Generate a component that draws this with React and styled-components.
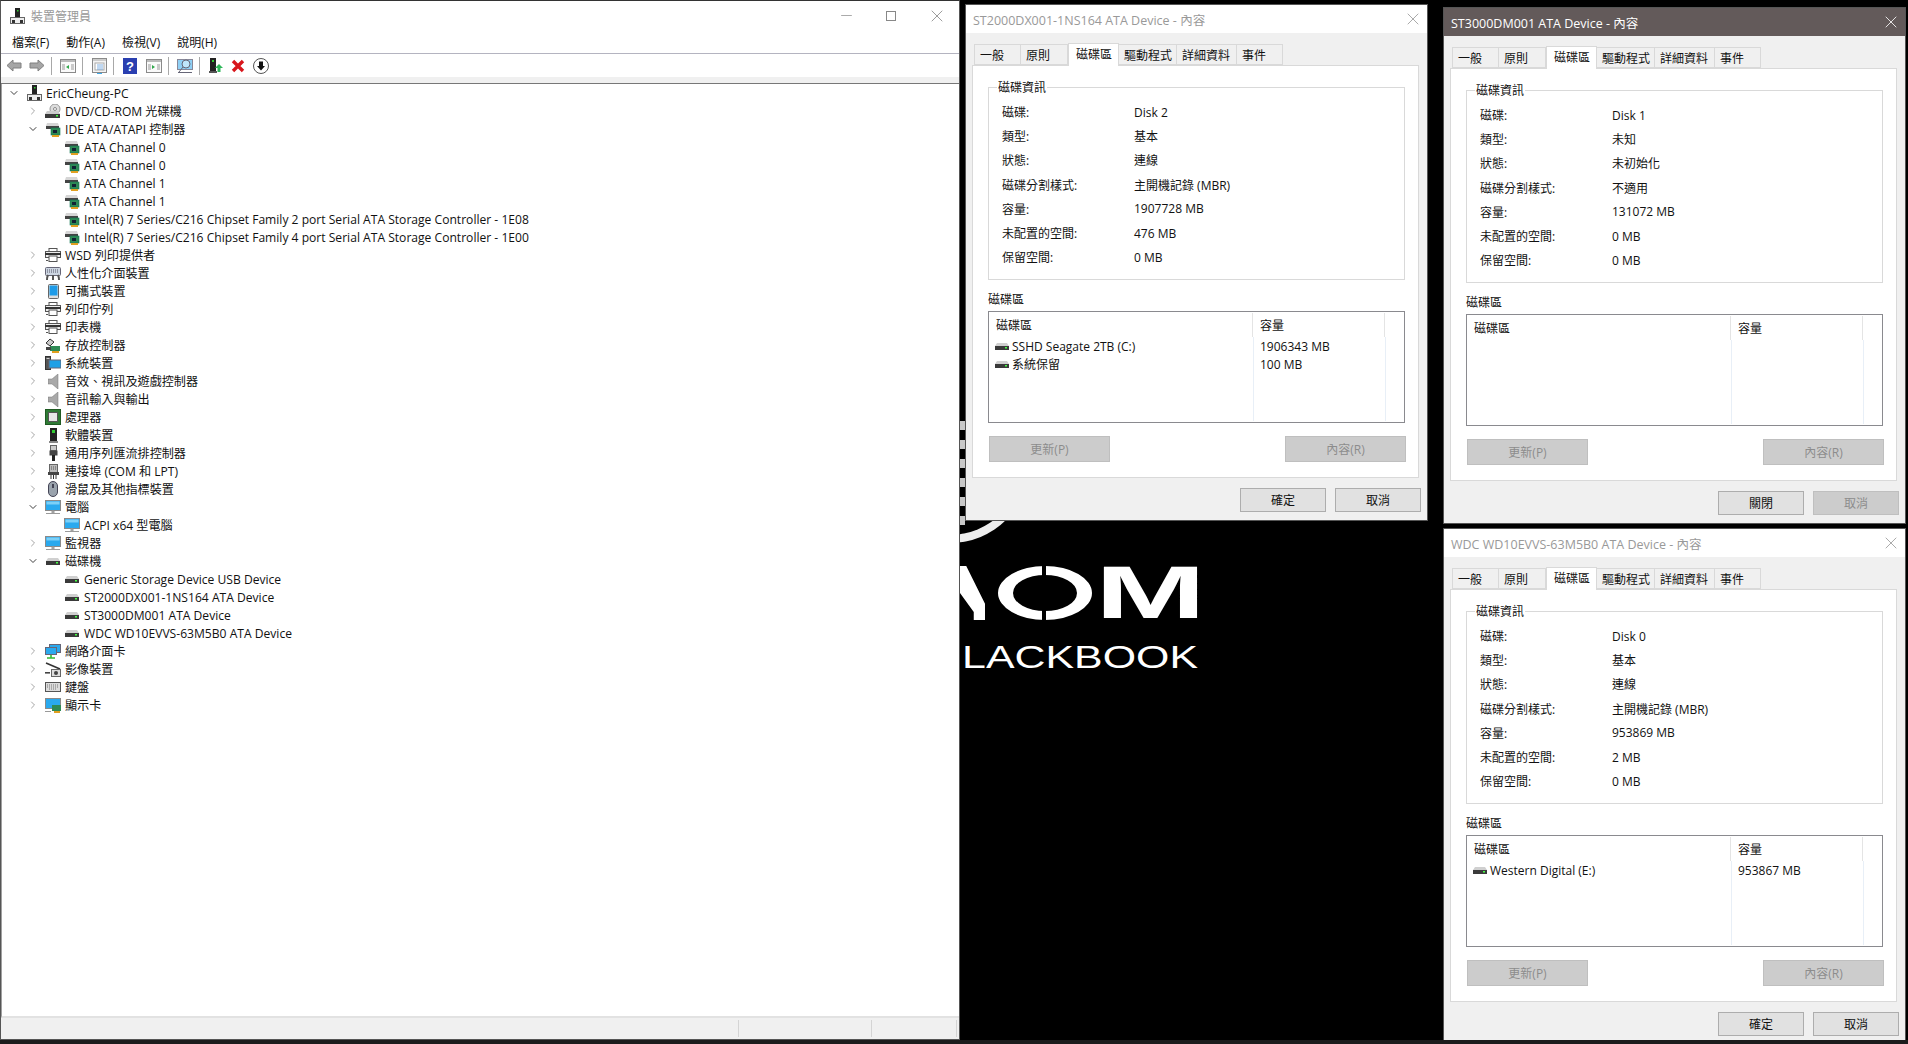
import React from "react"
import styled, { createGlobalStyle } from "styled-components"
import { ChevronRight, ChevronDown, X, Minus } from "lucide-react"

const GlobalStyle = createGlobalStyle`
  html, body { margin: 0; padding: 0; background: #000; overflow: hidden; }
  body {
    font-family: "Open Sans", "Noto Sans CJK TC", sans-serif;
    font-size: 12px;
    color: #111;
  }
`

const Page = styled.div`
  width: 1908px;
  height: 1044px;
  display: flex;
  flex-direction: column;
  background: #000;
  overflow: hidden;
`
const Desktop = styled.div`
  height: 1040px;
  display: flex;
  overflow: hidden;
`
const Taskbar = styled.div`
  height: 4px;
  background: #1c1c1c;
`

/* ---- device manager ---- */
const MainWindow = styled.div`
  width: 960px;
  height: 1040px;
  flex: none;
  box-sizing: border-box;
  background: #fff;
  border-top: 1px solid #333;
  border-left: 1px solid #555;
  border-right: 1px solid #555;
  display: flex;
  flex-direction: column;
`
const MainTitle = styled.div`
  height: 29px;
  display: flex;
  align-items: center;
  padding: 0 0 0 9px;
  color: #999;
  font-size: 12px;
  gap: 6px;
`
const WinControls = styled.div`
  margin-left: auto;
  display: flex;
  align-items: center;
  gap: 31px;
  padding-right: 12px;
  color: #888;
`
const MaxBox = styled.span`
  width: 10px;
  height: 10px;
  box-sizing: border-box;
  border: 1px solid #888;
`
const MenuBar = styled.div`
  height: 23px;
  display: flex;
  align-items: center;
  padding-left: 11px;
  gap: 17px;
  border-bottom: 1px solid #b4b4c0;
  font-size: 12px;
`
const Toolbar = styled.div`
  height: 23px;
  display: flex;
  align-items: center;
  padding-left: 5px;
  background: #fff;
`
const ToolIcon = styled.span`
  width: 16px;
  height: 18px;
  margin-right: ${(p) => p.$gap || 0}px;
  display: flex;
  align-items: center;
  justify-content: center;
`
const ToolSep = styled.span`
  width: 1px;
  height: 18px;
  background: #a8a8a8;
  margin-left: 6px;
  margin-right: 8px;
`
const ToolStrip = styled.div`
  height: 6px;
  background: #f0f0f0;
  border-bottom: 1px solid #777;
`
const TreePane = styled.div`
  flex: 1;
  border-left: 1px solid #a0a0a0;
  border-bottom: 2px solid #e2e2e2;
  background: #fff;
`
const TreeRow = styled.div`
  height: 18px;
  display: flex;
  align-items: center;
  padding-left: ${(p) => p.$level * 19 + 6}px;
  white-space: nowrap;
  font-size: 12.1px;
`
const Twisty = styled.span`
  width: 12px;
  height: 12px;
  flex: none;
  display: flex;
  align-items: center;
  justify-content: center;
  color: ${(p) => (p.$open ? "#404040" : "#a6a6a6")};
  margin-right: 6px;
`
const TwistySpace = styled.span`
  width: 18px;
  flex: none;
`
const TreeIcon = styled.span`
  width: 16px;
  height: 16px;
  flex: none;
  display: flex;
  align-items: center;
  justify-content: center;
  margin-right: 4px;
`
const StatusBar = styled.div`
  height: 21px;
  flex: none;
  display: flex;
  justify-content: flex-end;
  background: #f0f0f0;
  border-bottom: 1px solid #555;
`
const StatusCell = styled.div`
  width: ${(p) => p.$w}px;
  box-sizing: border-box;
  border-left: 1px solid #d4d4d4;
  margin: 2px 0;
`

/* ---- properties dialogs ---- */
const MiddleColumn = styled.div`
  width: 477px;
  flex: none;
  position: relative;
  padding: 4px 0 0 5px;
  box-sizing: border-box;
`
const RightColumn = styled.div`
  flex: 1;
  display: flex;
  flex-direction: column;
  padding: 7px 0 0 6px;
  gap: 4px;
  background: #000;
`
const Dialog = styled.div`
  width: 463px;
  height: 517px;
  flex: none;
  box-sizing: border-box;
  border: 1px solid #555;
  background: #f0f0f0;
  position: relative;
  z-index: 1;
`
const DialogTitle = styled.div`
  height: 28px;
  display: flex;
  align-items: center;
  justify-content: space-between;
  padding: 0 4px 0 7px;
  font-size: 12.5px;
  background: ${(p) => (p.$active ? "#635a5a" : "#fff")};
  color: ${(p) => (p.$active ? "#fff" : "#999")};
`
const TabRow = styled.div`
  display: flex;
  align-items: flex-end;
  height: 23px;
  margin: 9px 0 0 8px;
  position: relative;
  z-index: 1;
`
const Tab = styled.div`
  width: ${(p) => p.$w}px;
  box-sizing: border-box;
  height: ${(p) => (p.$on ? 23 : 21)}px;
  margin-bottom: ${(p) => (p.$on ? -1 : 0)}px;
  background: ${(p) => (p.$on ? "#fff" : "#f0f0f0")};
  border: 1px solid #d9d9d9;
  border-bottom: ${(p) => (p.$on ? "none" : "1px solid #d9d9d9")};
  border-left: ${(p) => (p.$first || p.$on ? "1px solid #d9d9d9" : "none")};
  display: flex;
  align-items: center;
  padding-left: ${(p) => (p.$on ? 7 : 5)}px;
  padding-bottom: ${(p) => (p.$on ? 3 : 0)}px;
  font-size: 12px;
`
const TabPanel = styled.div`
  height: 413px;
  box-sizing: border-box;
  margin: 0 8px 0 6px;
  background: #fff;
  border: 1px solid #d9d9d9;
  padding: 21px 13px 0 15px;
`
const GroupBox = styled.div`
  height: 193px;
  box-sizing: border-box;
  border: 1px solid #d9d9d9;
  padding: 0 0 0 13px;
  position: relative;
`
const GroupTitle = styled.span`
  position: absolute;
  top: -8px;
  left: 8px;
  background: #fff;
  padding: 0 1px;
  font-size: 12px;
  line-height: 16px;
`
const InfoGrid = styled.div`
  display: grid;
  grid-template-columns: 132px 1fr;
  grid-auto-rows: 24.2px;
  align-items: center;
  padding-top: 12px;
  font-size: 12px;
`
const ListCaption = styled.div`
  margin-top: 6px;
  height: 25px;
  display: flex;
  align-items: center;
  font-size: 12px;
`
const ListBox = styled.div`
  height: 112px;
  box-sizing: border-box;
  border: 1px solid #8a8a8f;
  display: grid;
  grid-template-columns: 264px 132px 1fr;
  grid-auto-rows: min-content;
  position: relative;
  font-size: 12px;
`
const ListHead = styled.div`
  height: 24px;
  display: flex;
  align-items: center;
  padding-left: 7px;
  border-right: 1px solid #e4e4e4;
  margin-top: 1px;
`
const ListCell = styled.div`
  height: 18px;
  display: flex;
  align-items: center;
  padding-left: ${(p) => p.$pad || 6}px;
  gap: 3px;
  white-space: nowrap;
`
const ColLine = styled.div`
  position: absolute;
  top: 25px;
  bottom: 1px;
  left: ${(p) => p.$x}px;
  width: 1px;
  background: #e8eff7;
`
const PanelButtons = styled.div`
  display: flex;
  justify-content: space-between;
  margin: 13px -1px 0 1px;
`
const GrayButton = styled.div`
  width: 121px;
  height: 26px;
  box-sizing: border-box;
  background: #ccc;
  border: 1px solid #bfbfbf;
  color: #8c8c8c;
  display: flex;
  align-items: center;
  justify-content: center;
  font-size: 12px;
`
const DialogFooter = styled.div`
  display: flex;
  justify-content: flex-end;
  gap: 9px;
  padding: 10px 6px 0 0;
`
const FootButton = styled.div`
  width: 86px;
  height: 24px;
  box-sizing: border-box;
  background: ${(p) => (p.$off ? "#ccc" : "#e1e1e1")};
  border: 1px solid ${(p) => (p.$off ? "#bfbfbf" : "#adadad")};
  color: ${(p) => (p.$off ? "#8c8c8c" : "#111")};
  display: flex;
  align-items: center;
  justify-content: center;
  font-size: 12px;
`

/* ---- wallpaper logo ---- */
const Logo = styled.div`
  position: absolute;
  left: 0;
  top: 0;
  width: 100%;
  height: 100%;
  overflow: hidden;
  color: #fff;
  font-family: "Liberation Sans", sans-serif;
  font-weight: 700;
`
const LogoBig = styled.div`
  position: absolute;
  left: 0;
  top: 566px;
  display: flex;
  gap: 13px;
  align-items: center;
`
const LogoBar = styled.span`
  width: 25px;
  height: 54px;
  background: #fff;
  clip-path: polygon(0 0, 25% 0, 100% 70%, 100% 100%, 55% 100%, 55% 85%, 0 50%);
`
const LogoO = styled.span`
  width: 94px;
  height: 54px;
  box-sizing: border-box;
  border: 15px solid #fff;
  border-top-width: 9px;
  border-bottom-width: 9px;
  border-radius: 50%;
  position: relative;
  &::before {
    content: "";
    position: absolute;
    left: 29px;
    top: -10px;
    bottom: -10px;
    width: 4px;
    background: #000;
  }
`
const LogoM = styled.span`
  width: 93px;
  margin-left: -10px;
  font-size: 74px;
  line-height: 54px;
  transform-origin: left center;
  transform: scaleX(1.8);
`
const LogoSmall = styled.div`
  position: absolute;
  left: 61px;
  top: 645px;
  width: 177px;
  text-align: right;
  white-space: nowrap;
  font-size: 32px;
  font-weight: 400;
  line-height: 24px;
  transform-origin: right center;
  transform: scaleX(1.34);
`
const LogoRing = styled.div`
  position: absolute;
  left: -90px;
  top: 383px;
  width: 144px;
  height: 144px;
  border: 8px solid transparent;
  border-bottom-color: #eee;
  border-radius: 50%;
`
const LogoStripes = styled.div`
  position: absolute;
  left: 0;
  top: 421px;
  width: 5px;
  height: 104px;
  background: repeating-linear-gradient(#c8c8c8 0 9px, #000 9px 19px);
`

/* ---- icons ---- */
const ComputerIcon = () => (
  <svg width="15" height="16" viewBox="0 0 15 16">
    <rect x="5" y="0" width="5" height="9" fill="#222" />
    <rect x="7" y="2" width="1.5" height="1.5" fill="#3c3" />
    <rect x="0.5" y="9.5" width="14" height="6" fill="#eee" stroke="#666" />
    <rect x="2" y="12" width="3" height="3" fill="#333" />
    <rect x="10" y="12" width="3" height="3" fill="#333" />
  </svg>
)
const DriveIcon = () => (
  <svg width="14" height="9" viewBox="0 0 14 9">
    <path d="M2 1h10l2 3H0z" fill="#d0d0d0" />
    <rect x="0" y="4" width="14" height="4" fill="#3a3a3a" />
    <rect x="10" y="5" width="2" height="1.5" fill="#4f4" />
  </svg>
)
const ControllerIcon = () => (
  <svg width="16" height="15" viewBox="0 0 16 15">
    <path d="M2 1h11l1 3H1z" fill="#d6d6d6" />
    <rect x="1" y="4" width="13" height="3" fill="#444" />
    <rect x="6" y="6" width="9" height="7" fill="#2e8a55" stroke="#175" strokeWidth="0.6" />
    <rect x="8" y="8" width="4" height="3" fill="#123" />
    <rect x="7" y="13" width="7" height="2" fill="#e0a020" />
  </svg>
)
const DvdIcon = () => (
  <svg width="16" height="15" viewBox="0 0 16 15">
    <circle cx="10" cy="5" r="5" fill="#ddd" stroke="#999" />
    <circle cx="10" cy="5" r="1.5" fill="#fff" stroke="#888" />
    <path d="M2 7h11l2 3H0z" fill="#ccc" />
    <rect x="0" y="10" width="15" height="4" fill="#3a3a3a" />
    <rect x="11" y="11" width="2" height="1.5" fill="#4f4" />
  </svg>
)
const PrinterIcon = () => (
  <svg width="16" height="14" viewBox="0 0 16 14">
    <rect x="4" y="0.5" width="8" height="3" fill="#fff" stroke="#555" />
    <rect x="0.5" y="3.5" width="15" height="6" fill="#ececec" stroke="#555" />
    <rect x="0" y="5" width="16" height="2" fill="#333" />
    <rect x="4" y="8" width="8" height="5.5" fill="#fff" stroke="#555" />
    <rect x="1" y="12" width="2" height="1" fill="#555" />
  </svg>
)
const HidIcon = () => (
  <svg width="16" height="15" viewBox="0 0 16 15">
    <rect x="0.5" y="1.5" width="15" height="8" rx="1" fill="#cdd6e2" stroke="#667" />
    <path d="M2 4h12M2 6h12" stroke="#556" strokeDasharray="1 1" />
    <path d="M3 9c-1 2-1 4-1 5M8 9v5M13 9c1 2 1 4 1 5" stroke="#555" strokeWidth="2" fill="none" />
  </svg>
)
const PhoneIcon = () => (
  <svg width="11" height="15" viewBox="0 0 11 15">
    <rect x="0.5" y="0.5" width="10" height="14" rx="1" fill="#ddd" stroke="#666" />
    <rect x="1.5" y="1.5" width="8" height="10" fill="#1e9be8" />
  </svg>
)
const StorageIcon = () => (
  <svg width="16" height="15" viewBox="0 0 16 15">
    <path d="M1 5l4-4 4 3-4 4z" fill="#ccc" stroke="#333" />
    <rect x="5" y="8" width="10" height="5" fill="#2e8a55" />
    <rect x="7" y="13" width="7" height="2" fill="#e0a020" />
    <rect x="1" y="9" width="5" height="3" fill="#444" />
  </svg>
)
const SystemIcon = () => (
  <svg width="16" height="14" viewBox="0 0 16 14">
    <rect x="0.5" y="0.5" width="5" height="13" fill="#555" stroke="#333" />
    <rect x="4" y="4" width="12" height="8" fill="#1ea0e6" stroke="#667" />
    <rect x="1.5" y="2" width="3" height="1" fill="#ccc" />
  </svg>
)
const SpeakerIcon = () => (
  <svg width="11" height="15" viewBox="0 0 11 15">
    <path d="M0 5h4l6-5v15l-6-5H0z" fill="#a9a9a9" stroke="#777" strokeWidth="0.5" />
  </svg>
)
const CpuIcon = () => (
  <svg width="16" height="16" viewBox="0 0 16 16">
    <rect x="0.5" y="0.5" width="15" height="15" fill="#2f7a35" stroke="#1e5a22" />
    <rect x="3.5" y="3.5" width="9" height="9" fill="#e8e8e8" stroke="#555" />
  </svg>
)
const SoftwareIcon = () => (
  <svg width="9" height="15" viewBox="0 0 9 15">
    <rect x="1" y="0" width="7" height="13" fill="#222" />
    <rect x="3" y="2" width="3" height="3" fill="#3c3" />
    <rect x="0" y="13" width="9" height="2" fill="#888" />
  </svg>
)
const UsbIcon = () => (
  <svg width="9" height="16" viewBox="0 0 9 16">
    <rect x="1.5" y="0.5" width="6" height="5" fill="#ccc" stroke="#666" />
    <rect x="0.5" y="5.5" width="8" height="5" fill="#444" />
    <rect x="3" y="10" width="3" height="6" fill="#222" />
  </svg>
)
const PortIcon = () => (
  <svg width="11" height="15" viewBox="0 0 11 15">
    <rect x="1.5" y="0.5" width="8" height="8" fill="#bbb" stroke="#666" />
    <path d="M3 3h5M3 5h5" stroke="#555" strokeDasharray="1 1" />
    <rect x="0" y="8" width="11" height="3" fill="#444" />
    <path d="M3 11v4M5.5 11v4M8 11v4" stroke="#333" />
  </svg>
)
const MouseIcon = () => (
  <svg width="10" height="16" viewBox="0 0 10 16">
    <rect x="0.5" y="0.5" width="9" height="15" rx="4.5" fill="#9aa3ad" stroke="#445" />
    <rect x="4" y="3" width="2" height="4" fill="#445" />
  </svg>
)
const MonitorIcon = () => (
  <svg width="16" height="15" viewBox="0 0 16 15">
    <rect x="0.5" y="0.5" width="15" height="10" fill="#2aa9ee" stroke="#8a8a8a" />
    <rect x="1.5" y="1.5" width="13" height="3" fill="#7cd0f7" />
    <path d="M7 11h2v2H7zM1 13.5h14" stroke="#9a9a9a" fill="#bbb" />
  </svg>
)
const NetworkIcon = () => (
  <svg width="16" height="15" viewBox="0 0 16 15">
    <rect x="4.5" y="0.5" width="11" height="8" fill="#2aa9ee" stroke="#667" />
    <rect x="0.5" y="3.5" width="11" height="7" fill="#2aa9ee" stroke="#667" />
    <path d="M6 11v3M2 14h8" stroke="#3b3" strokeWidth="1.6" />
  </svg>
)
const CameraIcon = () => (
  <svg width="16" height="15" viewBox="0 0 16 15">
    <path d="M1 1l14 6" stroke="#333" strokeWidth="1.6" />
    <rect x="6.5" y="7.5" width="9" height="7" fill="#ddd" stroke="#666" />
    <circle cx="11" cy="11" r="2" fill="#444" />
    <rect x="0" y="10" width="5" height="1.6" fill="#444" />
  </svg>
)
const KeyboardIcon = () => (
  <svg width="16" height="10" viewBox="0 0 16 10">
    <rect x="0.5" y="0.5" width="15" height="9" fill="#dcdcdc" stroke="#555" />
    <path d="M2 3h12M2 5h12M4 7h8" stroke="#777" strokeDasharray="1 1" />
  </svg>
)
const DisplayCardIcon = () => (
  <svg width="16" height="15" viewBox="0 0 16 15">
    <rect x="0.5" y="0.5" width="15" height="10" fill="#2aa9ee" stroke="#8a8a8a" />
    <rect x="7" y="7" width="9" height="6" fill="#2e8a55" />
    <rect x="9" y="13" width="6" height="2" fill="#e0a020" />
    <path d="M0 13.5h6" stroke="#999" />
  </svg>
)
const WindowIcon = ({ arrow }) => (
  <svg width="16" height="14" viewBox="0 0 16 14">
    <rect x="0.5" y="0.5" width="15" height="13" fill="#fafafa" stroke="#8a8a8a" />
    <rect x="1" y="1" width="14" height="2" fill="#bbb" />
    <path d={arrow} fill="#2fa84a" />
    <path d="M11 6h3M11 8h3M11 10h3M2 6h3M2 8h3M2 10h3" stroke="#999" />
  </svg>
)
const SheetIcon = () => (
  <svg width="15" height="16" viewBox="0 0 15 16">
    <rect x="0.5" y="0.5" width="14" height="14" fill="#f4f4f4" stroke="#8a8a8a" />
    <rect x="1" y="1" width="13" height="2" fill="#ccc" />
    <rect x="3" y="5" width="9" height="7" fill="#fff" stroke="#aaa" />
    <path d="M5 7h6M5 9h6M5 11h6" stroke="#4a90d8" strokeWidth="0.7" />
    <path d="M5 15.5h5" stroke="#3fa9e8" />
  </svg>
)
const ArrowIcon = ({ flip }) => (
  <svg width="16" height="13" viewBox="0 0 16 13">
    <path
      d="M1 6.5L7 1v3h8v5H7v3z"
      transform={flip ? "matrix(-1 0 0 1 16 0)" : undefined}
      fill="#a6a6a6"
      stroke="#808080"
    />
  </svg>
)

const TREE = [
  { l: 0, open: true, icon: <ComputerIcon />, t: "EricCheung-PC" },
  { l: 1, icon: <DvdIcon />, t: "DVD/CD-ROM 光碟機" },
  { l: 1, open: true, icon: <ControllerIcon />, t: "IDE ATA/ATAPI 控制器" },
  { l: 2, icon: <ControllerIcon />, t: "ATA Channel 0" },
  { l: 2, icon: <ControllerIcon />, t: "ATA Channel 0" },
  { l: 2, icon: <ControllerIcon />, t: "ATA Channel 1" },
  { l: 2, icon: <ControllerIcon />, t: "ATA Channel 1" },
  { l: 2, icon: <ControllerIcon />, t: "Intel(R) 7 Series/C216 Chipset Family 2 port Serial ATA Storage Controller - 1E08" },
  { l: 2, icon: <ControllerIcon />, t: "Intel(R) 7 Series/C216 Chipset Family 4 port Serial ATA Storage Controller - 1E00" },
  { l: 1, icon: <PrinterIcon />, t: "WSD 列印提供者" },
  { l: 1, icon: <HidIcon />, t: "人性化介面裝置" },
  { l: 1, icon: <PhoneIcon />, t: "可攜式裝置" },
  { l: 1, icon: <PrinterIcon />, t: "列印佇列" },
  { l: 1, icon: <PrinterIcon />, t: "印表機" },
  { l: 1, icon: <StorageIcon />, t: "存放控制器" },
  { l: 1, icon: <SystemIcon />, t: "系統裝置" },
  { l: 1, icon: <SpeakerIcon />, t: "音效、視訊及遊戲控制器" },
  { l: 1, icon: <SpeakerIcon />, t: "音訊輸入與輸出" },
  { l: 1, icon: <CpuIcon />, t: "處理器" },
  { l: 1, icon: <SoftwareIcon />, t: "軟體裝置" },
  { l: 1, icon: <UsbIcon />, t: "通用序列匯流排控制器" },
  { l: 1, icon: <PortIcon />, t: "連接埠 (COM 和 LPT)" },
  { l: 1, icon: <MouseIcon />, t: "滑鼠及其他指標裝置" },
  { l: 1, open: true, icon: <MonitorIcon />, t: "電腦" },
  { l: 2, icon: <MonitorIcon />, t: "ACPI x64 型電腦" },
  { l: 1, icon: <MonitorIcon />, t: "監視器" },
  { l: 1, open: true, icon: <DriveIcon />, t: "磁碟機" },
  { l: 2, icon: <DriveIcon />, t: "Generic Storage Device USB Device" },
  { l: 2, icon: <DriveIcon />, t: "ST2000DX001-1NS164 ATA Device" },
  { l: 2, icon: <DriveIcon />, t: "ST3000DM001 ATA Device" },
  { l: 2, icon: <DriveIcon />, t: "WDC WD10EVVS-63M5B0 ATA Device" },
  { l: 1, icon: <NetworkIcon />, t: "網路介面卡" },
  { l: 1, icon: <CameraIcon />, t: "影像裝置" },
  { l: 1, icon: <KeyboardIcon />, t: "鍵盤" },
  { l: 1, icon: <DisplayCardIcon />, t: "顯示卡" },
]

const DISKS = [
  {
    title: "ST2000DX001-1NS164 ATA Device - 內容",
    info: ["Disk 2", "基本", "連線", "主開機記錄 (MBR)", "1907728 MB", "476 MB", "0 MB"],
    vols: [["SSHD Seagate 2TB (C:)", "1906343 MB"], ["系統保留", "100 MB"]],
  },
  {
    title: "ST3000DM001 ATA Device - 內容",
    active: true,
    info: ["Disk 1", "未知", "未初始化", "不適用", "131072 MB", "0 MB", "0 MB"],
    vols: [],
  },
  {
    title: "WDC WD10EVVS-63M5B0 ATA Device - 內容",
    info: ["Disk 0", "基本", "連線", "主開機記錄 (MBR)", "953869 MB", "2 MB", "0 MB"],
    vols: [["Western Digital (E:)", "953867 MB"]],
  },
]
const LABELS = ["磁碟:", "類型:", "狀態:", "磁碟分割樣式:", "容量:", "未配置的空間:", "保留空間:"]
const TABS = [["一般", 47], ["原則", 47], ["磁碟區", 51], ["驅動程式", 58], ["詳細資料", 60], ["事件", 46]]

const PropertiesDialog = ({ disk }) => (
  <Dialog>
    <DialogTitle $active={disk.active}>
      <span>{disk.title}</span>
      <X size={20} strokeWidth={1} />
    </DialogTitle>
    <TabRow>
      {TABS.map(([name, w], i) => (
        <Tab key={name} $w={w} $first={i === 0} $on={i === 2}>{name}</Tab>
      ))}
    </TabRow>
    <TabPanel>
      <GroupBox>
        <GroupTitle>磁碟資訊</GroupTitle>
        <InfoGrid>
          {LABELS.map((label, i) => (
            <React.Fragment key={label}>
              <span>{label}</span>
              <span>{disk.info[i]}</span>
            </React.Fragment>
          ))}
        </InfoGrid>
      </GroupBox>
      <ListCaption>磁碟區</ListCaption>
      <ListBox>
        <ListHead>磁碟區</ListHead>
        <ListHead>容量</ListHead>
        <span />
        {disk.vols.map(([name, size]) => (
          <React.Fragment key={name}>
            <ListCell><DriveIcon />{name}</ListCell>
            <ListCell $pad={7}>{size}</ListCell>
            <span />
          </React.Fragment>
        ))}
        <ColLine $x={264} />
        <ColLine $x={396} />
      </ListBox>
      <PanelButtons>
        <GrayButton>更新(P)</GrayButton>
        <GrayButton>內容(R)</GrayButton>
      </PanelButtons>
    </TabPanel>
    <DialogFooter>
      <FootButton>{disk.active ? "關閉" : "確定"}</FootButton>
      <FootButton $off={disk.active}>取消</FootButton>
    </DialogFooter>
  </Dialog>
)

const App = () => (
  <Page>
    <GlobalStyle />
    <Desktop>
      <MainWindow>
        <MainTitle>
          <ComputerIcon />
          <span>裝置管理員</span>
          <WinControls>
            <Minus size={17} strokeWidth={1} />
            <MaxBox />
            <X size={20} strokeWidth={1} />
          </WinControls>
        </MainTitle>
        <MenuBar>
          <span>檔案(F)</span>
          <span>動作(A)</span>
          <span>檢視(V)</span>
          <span>說明(H)</span>
        </MenuBar>
        <Toolbar>
          <ToolIcon $gap={7}><ArrowIcon /></ToolIcon>
          <ToolIcon><ArrowIcon flip /></ToolIcon>
          <ToolSep />
          <ToolIcon><WindowIcon arrow="M9 6v4L6 8z" /></ToolIcon>
          <ToolSep />
          <ToolIcon><SheetIcon /></ToolIcon>
          <ToolSep />
          <ToolIcon $gap={8}>
            <svg width="14" height="16" viewBox="0 0 14 16">
              <rect width="14" height="16" fill="#2a3fb0" />
              <text x="7" y="13" fontSize="13" fontWeight="700" fill="#fff" textAnchor="middle" fontFamily="Liberation Sans">?</text>
            </svg>
          </ToolIcon>
          <ToolIcon><WindowIcon arrow="M6 6v4l3-2z" /></ToolIcon>
          <ToolSep />
          <ToolIcon>
            <svg width="16" height="16" viewBox="0 0 16 16">
              <rect x="0.5" y="1.5" width="15" height="10" fill="#8fd0f5" stroke="#889" />
              <circle cx="9" cy="6" r="4" fill="#bfe6fb" stroke="#667" />
              <path d="M6 9l-4 5M1 14.5h14" stroke="#667" />
            </svg>
          </ToolIcon>
          <ToolSep />
          <ToolIcon $gap={6}>
            <svg width="14" height="16" viewBox="0 0 14 16">
              <rect x="1" y="0" width="6" height="13" fill="#222" />
              <rect x="3" y="2" width="2" height="2" fill="#3c3" />
              <rect x="0" y="13" width="8" height="2" fill="#555" />
              <path d="M10 6l4 4h-2.5v4h-3v-4H6z" fill="#2fb85a" />
            </svg>
          </ToolIcon>
          <ToolIcon $gap={7}>
            <svg width="14" height="14" viewBox="0 0 14 14">
              <path d="M2 2l10 10M12 2L2 12" stroke="#d8161c" strokeWidth="3.4" />
            </svg>
          </ToolIcon>
          <ToolIcon>
            <svg width="16" height="16" viewBox="0 0 16 16">
              <circle cx="8" cy="8" r="7.5" fill="#fff" stroke="#555" />
              <path d="M6 3.5h4V8h2l-4 4.5L4 8h2z" fill="#111" />
            </svg>
          </ToolIcon>
        </Toolbar>
        <ToolStrip />
        <TreePane>
          {TREE.map((row, i) => (
            <TreeRow key={i} $level={row.l}>
              {row.l < 2 ? (
                <Twisty $open={row.open}>
                  {row.open
                    ? <ChevronDown size={14} strokeWidth={2} />
                    : <ChevronRight size={14} strokeWidth={2} />}
                </Twisty>
              ) : <TwistySpace />}
              <TreeIcon>{row.icon}</TreeIcon>
              <span>{row.t}</span>
            </TreeRow>
          ))}
        </TreePane>
        <StatusBar>
          <StatusCell $w={133} />
          <StatusCell $w={85} />
          <StatusCell $w={3} />
        </StatusBar>
      </MainWindow>
      <MiddleColumn>
        <Logo>
          <LogoRing />
          <LogoStripes />
          <LogoBig>
            <LogoBar />
            <LogoO />
            <LogoM>M</LogoM>
          </LogoBig>
          <LogoSmall>LACKBOOK</LogoSmall>
        </Logo>
        <PropertiesDialog disk={DISKS[0]} />
      </MiddleColumn>
      <RightColumn>
        <PropertiesDialog disk={DISKS[1]} />
        <PropertiesDialog disk={DISKS[2]} />
      </RightColumn>
    </Desktop>
    <Taskbar />
  </Page>
)

export default App
